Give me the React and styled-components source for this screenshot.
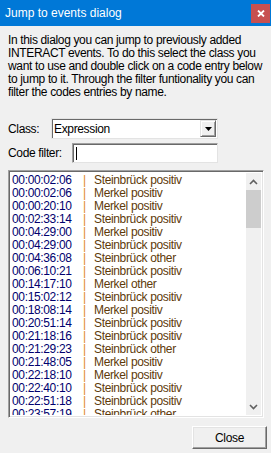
import React from "react";
import styled, { createGlobalStyle } from "styled-components";

const Global = createGlobalStyle`
  html, body { margin: 0; padding: 0; background: #f0f0f0; }
  body { font-family: "Liberation Sans", Arial, sans-serif; font-size: 12px; letter-spacing: -0.35px; color: #000; }
  * { box-sizing: border-box; }
`;

const Window = styled.div`
  width: 271px;
  height: 453px;
  background: #f0f0f0;
  display: flex;
  flex-direction: column;
  overflow: hidden;
`;

const TitleBar = styled.div`
  height: 26px;
  background: #0078d7;
  display: flex;
  align-items: center;
  justify-content: space-between;
  padding: 0 1px 0 5px;
  flex-shrink: 0;
`;

const Title = styled.span`
  color: #fff;
  font-size: 12px;
  letter-spacing: 0;
`;

const CloseX = styled.div`
  width: 19px;
  height: 19px;
  background: #c75050;
  display: flex;
  align-items: center;
  justify-content: center;
`;

const Body = styled.div`
  flex: 1;
  display: flex;
  flex-direction: column;
  padding: 8px 4px 2px 8px;
`;

const Description = styled.p`
  margin: 0;
  line-height: 13px;
  font-size: 12px;
  width: 258px;
`;

const FormRow = styled.div`
  display: flex;
  align-items: center;
  margin-top: ${(p) => p.$top}px;
  height: ${(p) => p.$h}px;
`;

const Label = styled.span`
  width: ${(p) => p.$w}px;
  flex-shrink: 0;
`;

const Combo = styled.div`
  width: 167px;
  height: 21px;
  background: #fff;
  border-top: 1px solid #a0a0a0;
  border-left: 1px solid #a0a0a0;
  border-right: 1px solid #fff;
  border-bottom: 1px solid #fff;
  box-shadow: inset 1px 1px 0 #696969;
  outline: 1px solid #e3e3e3;
  outline-offset: -1px;
  display: flex;
  align-items: center;
  padding-left: 2px;
`;

const ComboText = styled.span`
  flex: 1;
`;

const ComboButton = styled.div`
  width: 16px;
  height: 17px;
  margin-right: 1px;
  background: #f0f0f0;
  border-top: 1px solid #e3e3e3;
  border-left: 1px solid #e3e3e3;
  border-right: 1px solid #696969;
  border-bottom: 1px solid #696969;
  box-shadow: inset 1px 1px 0 #fff, inset -1px -1px 0 #a0a0a0;
  display: flex;
  align-items: center;
  justify-content: center;
`;

const TextInput = styled.div`
  width: 146px;
  height: 20px;
  background: #fff;
  border-top: 1px solid #a0a0a0;
  border-left: 1px solid #a0a0a0;
  border-right: 1px solid #e3e3e3;
  border-bottom: 1px solid #e3e3e3;
  box-shadow: inset 1px 1px 0 #696969;
  display: flex;
  align-items: center;
  padding-left: 3px;
`;

const Caret = styled.span`
  width: 1px;
  height: 13px;
  background: #000;
`;

const ListBox = styled.div`
  margin-top: 7px;
  width: 256px;
  height: 248px;
  background: #fff;
  border-top: 1px solid #a0a0a0;
  border-left: 1px solid #a0a0a0;
  border-right: 1px solid #fff;
  border-bottom: 1px solid #fff;
  box-shadow: inset 1px 1px 0 #696969, inset -1px -1px 0 #e3e3e3;
  display: flex;
  padding: 2px;
`;

const Rows = styled.div`
  flex: 1;
  overflow: hidden;
  padding-top: 1px;
`;

const Row = styled.div`
  display: grid;
  grid-template-columns: 72px 11px 1fr;
  height: 13px;
  line-height: 13px;
  white-space: nowrap;
`;

const Time = styled.span`
  color: #00006e;
  padding-left: 1px;
`;

const Sep = styled.span`
  color: #e08a2c;
`;

const Name = styled.span`
  color: #5e3a0a;
`;

const ScrollBar = styled.div`
  width: 15px;
  background: #f0f0f0;
  display: flex;
  flex-direction: column;
`;

const ScrollArrow = styled.div`
  height: 17px;
  display: flex;
  align-items: center;
  justify-content: center;
`;

const Thumb = styled.div`
  height: 38px;
  background: #cdcdcd;
`;

const Track = styled.div`
  flex: 1;
`;

const Footer = styled.div`
  display: flex;
  justify-content: flex-end;
  margin-top: 8px;
`;

const Button = styled.div`
  width: 75px;
  height: 23px;
  background: #f0f0f0;
  border-top: 1px solid #fff;
  border-left: 1px solid #fff;
  border-right: 1px solid #696969;
  border-bottom: 1px solid #696969;
  box-shadow: inset -1px -1px 0 #a0a0a0, inset 1px 1px 0 #e3e3e3;
  display: flex;
  align-items: center;
  justify-content: center;
`;

const rows = [
  ["00:00:02:06", "Steinbrück positiv"],
  ["00:00:02:06", "Merkel positiv"],
  ["00:00:20:10", "Merkel positiv"],
  ["00:02:33:14", "Steinbrück positiv"],
  ["00:04:29:00", "Merkel positiv"],
  ["00:04:29:00", "Steinbrück positiv"],
  ["00:04:36:08", "Steinbrück other"],
  ["00:06:10:21", "Steinbrück positiv"],
  ["00:14:17:10", "Merkel other"],
  ["00:15:02:12", "Steinbrück positiv"],
  ["00:18:08:14", "Merkel positiv"],
  ["00:20:51:14", "Steinbrück positiv"],
  ["00:21:18:16", "Steinbrück positiv"],
  ["00:21:29:23", "Steinbrück other"],
  ["00:21:48:05", "Merkel positiv"],
  ["00:22:18:10", "Merkel positiv"],
  ["00:22:40:10", "Steinbrück positiv"],
  ["00:22:51:18", "Steinbrück positiv"],
  ["00:23:57:19", "Steinbrück other"],
];

const Chevron = ({ up }) => (
  <svg width="9" height="6" viewBox="0 0 9 6">
    <path
      d={up ? "M1 5 L4.5 1.5 L8 5" : "M1 1 L4.5 4.5 L8 1"}
      fill="none"
      stroke="#606060"
      strokeWidth="1.6"
    />
  </svg>
);

export default function App() {
  return (
    <Window>
      <Global />
      <TitleBar>
        <Title>Jump to events dialog</Title>
        <CloseX>
          <svg width="8" height="7" viewBox="0 0 8 7">
            <path d="M1 0.5 L7 6.5 M7 0.5 L1 6.5" stroke="#fff" strokeWidth="1.8" />
          </svg>
        </CloseX>
      </TitleBar>
      <Body>
        <Description>
          In this dialog you can jump to previously added INTERACT events. To do this
          select the class you want to use and double click on a code entry below to
          jump to it. Through the filter funtionality you can filter the codes entries
          by name.
        </Description>
        <FormRow $top={19} $h={21}>
          <Label $w={43}>Class:</Label>
          <Combo>
            <ComboText>Expression</ComboText>
            <ComboButton>
              <svg width="7" height="4" viewBox="0 0 7 4">
                <path d="M0 0 H7 L3.5 4 Z" fill="#000" />
              </svg>
            </ComboButton>
          </Combo>
        </FormRow>
        <FormRow $top={4} $h={20}>
          <Label $w={64}>Code filter:</Label>
          <TextInput>
            <Caret />
          </TextInput>
        </FormRow>
        <ListBox>
          <Rows>
            {rows.map(([t, n], i) => (
              <Row key={i}>
                <Time>{t}</Time>
                <Sep>|</Sep>
                <Name>{n}</Name>
              </Row>
            ))}
          </Rows>
          <ScrollBar>
            <ScrollArrow>
              <Chevron up />
            </ScrollArrow>
            <Thumb />
            <Track />
            <ScrollArrow>
              <Chevron />
            </ScrollArrow>
          </ScrollBar>
        </ListBox>
        <Footer>
          <Button>Close</Button>
        </Footer>
      </Body>
    </Window>
  );
}
